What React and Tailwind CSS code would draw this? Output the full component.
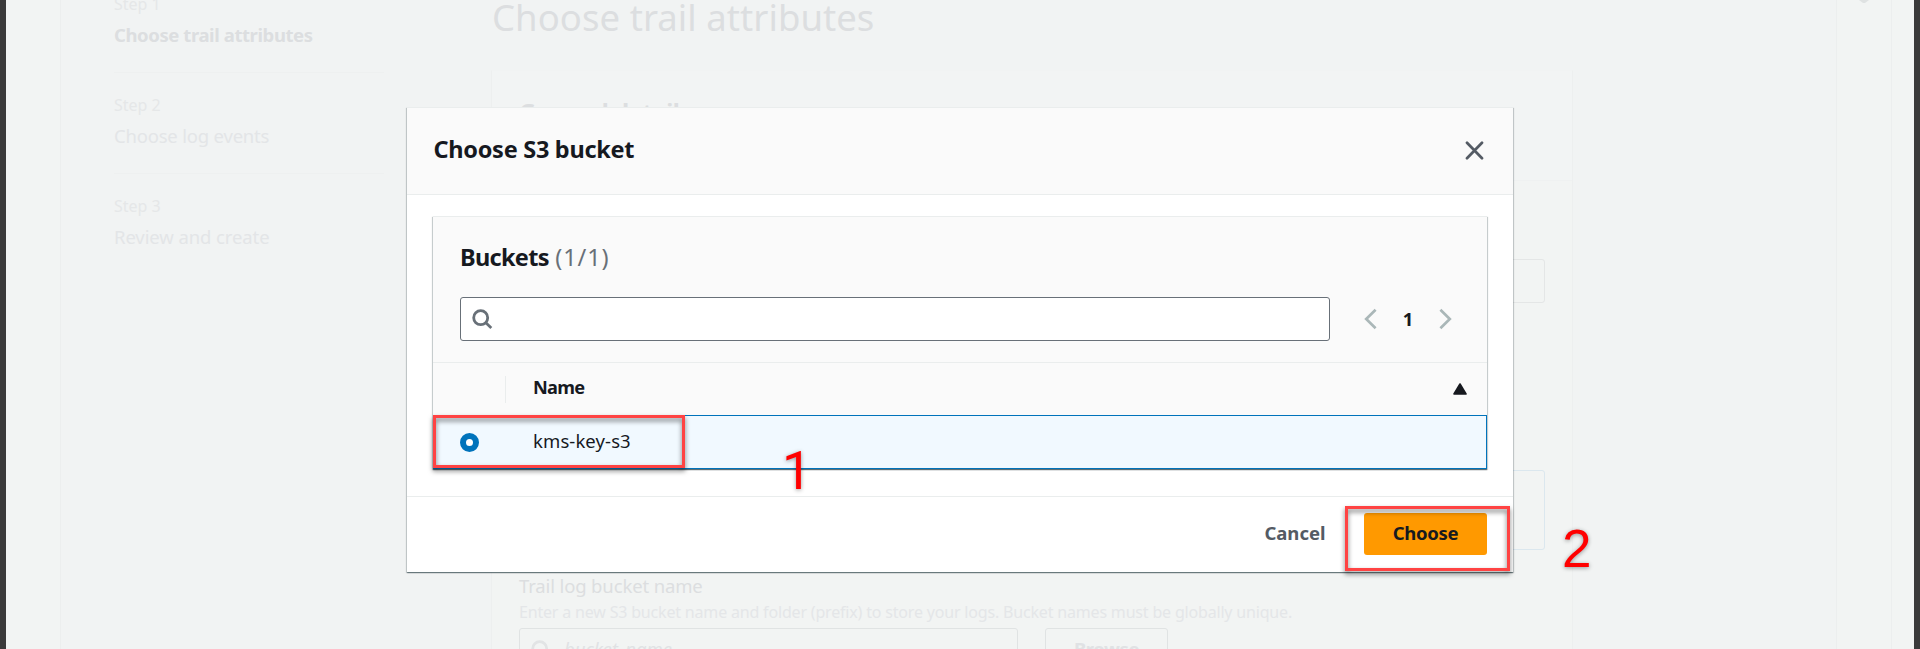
const steps = [
  { label: "Step 1", title: "Choose trail attributes", style: "font-bold tracking-[-0.41px] text-[#dcdee0]" },
  { label: "Step 2", title: "Choose log events", style: "tracking-[-0.2px] text-[#e3e5e7]" },
  { label: "Step 3", title: "Review and create", style: "tracking-[-0.1px] text-[#e3e5e7]" },
];

function SearchIcon({ className }) {
  return (
    <svg className={className} width="21" height="21" viewBox="0 0 21 21" fill="none" stroke="currentColor" strokeWidth="2.8">
      <circle cx="8.7" cy="8.7" r="7" />
      <path d="M13.6 13.6l5.7 5.4" />
    </svg>
  );
}

function Chevron({ flip }) {
  return (
    <svg className={flip ? "-scale-x-100" : ""} width="13" height="22" viewBox="0 0 13 22" fill="none" stroke="#aab7b8" strokeWidth="2.7">
      <path d="M11.6 1.8L2.2 11l9.4 9.2" />
    </svg>
  );
}

function StepNav() {
  return (
    <nav className="-mt-7 ml-[53px] w-[270px] shrink-0">
      {steps.map((s, i) => (
        <div key={s.label} className={`box-border h-[101px] pt-5 ${i < 2 ? "border-b border-[#eef0f0]" : ""}`}>
          <div className="text-base leading-6 text-[#e5e7e8]">{s.label}</div>
          <div className={`mt-[5px] text-[18.5px] leading-7 ${s.style}`}>{s.title}</div>
        </div>
      ))}
    </nav>
  );
}

function TrailForm() {
  return (
    <main className="-mt-[5px] ml-[107px] w-[1082px] shrink-0">
      <h1 className="h-11 pl-px text-[36.5px] leading-[44px] tracking-[0.05px] text-[#dcdee0]">Choose trail attributes</h1>
      <section className="mt-[31px] h-[700px] border-x border-t border-x-[#edefef] border-t-[#f1f3f3] bg-[#f2f4f3]">
        <h2 className="h-[110px] border-b border-[#eff1f1] bg-[#f2f4f4] pt-[25px] pl-[27px] text-[23.5px] leading-8 font-bold tracking-[-0.3px] text-[#dcdee0]">
          General details
        </h2>
        <div className="px-[27px]">
          <div className="mt-[78px] h-11 rounded-[3px] border border-[#e4e6e6]" />
          <div className="mt-[167px] h-[80px] rounded-[3px] border border-[#dbe7ee]" />
          <div className="mt-[22px] text-[18.5px] leading-7 tracking-[-0.14px] text-[#dcdee0]">Trail log bucket name</div>
          <div className="text-base leading-6 tracking-[-0.18px] whitespace-nowrap text-[#e4e6e8]">
            Enter a new S3 bucket name and folder (prefix) to store your logs. Bucket names must be globally unique.
          </div>
          <div className="mt-1 flex gap-[27px]">
            <div className="flex h-11 w-[499px] items-center rounded-[3px] border border-[#e0e3e3] pl-[11px]">
              <SearchIcon className="text-[#e2e4e5]" />
              <span className="mb-0.5 ml-3 text-[18.5px] italic text-[#e0e2e4]">bucket_name</span>
            </div>
            <div className="flex h-11 w-[123px] items-center justify-center rounded-[3px] border border-[#e0e3e3] pb-0.5 text-[18.5px] font-bold tracking-[-0.4px] text-[#e0e2e4]">
              Browse
            </div>
          </div>
        </div>
      </section>
    </main>
  );
}

function BucketTable() {
  return (
    <div className="h-[253px] border-t border-[#eaeded] bg-[#fafafa] shadow-[0_1px_1px_rgba(0,28,36,0.5),1px_1px_1px_rgba(0,28,36,0.15),-1px_1px_1px_rgba(0,28,36,0.15)]">
      <div className="h-[146px] border-b border-[#eaeded] px-[27px] pt-6">
        <div className="flex h-8 text-[23.5px] leading-8">
          <span className="font-bold tracking-[-0.7px]">Buckets</span>
          <span className="ml-[6.5px] tracking-[0.9px] text-[#687078]">(1/1)</span>
        </div>
        <div className="mt-6 flex items-center">
          <div className="flex h-11 w-[870px] items-center rounded-[3px] border border-[#687078] bg-white pl-[11px]">
            <SearchIcon className="text-[#687078]" />
          </div>
          <div className="ml-[34px] flex items-center">
            <Chevron />
            <span className="w-[62px] text-center text-[18.5px] leading-7 font-bold">1</span>
            <Chevron flip />
          </div>
        </div>
      </div>
      <div className="flex h-[52px] items-center pr-5">
        <div className="h-[27px] w-[73px] border-r border-[#eaeded]" />
        <span className="mb-1 ml-[27px] flex-1 text-[18.2px] leading-7 font-bold tracking-[-0.7px]">Name</span>
        <svg width="14" height="12" viewBox="0 0 14 12" fill="#16191f">
          <path d="M7 1L13 11H1z" stroke="#16191f" strokeWidth="1.6" strokeLinejoin="round" />
        </svg>
      </div>
      <div className="flex h-[54px] items-center border border-[#0073bb] bg-[#f1f9ff]">
        <div className="ml-[26px] size-[19px] rounded-full border-[6px] border-[#0073bb] bg-white" />
        <span className="mb-0.5 ml-[54px] text-[18.5px] leading-7 tracking-[0.1px]">kms-key-s3</span>
      </div>
    </div>
  );
}

function BucketDialog() {
  return (
    <div className="absolute top-[107px] left-[407px] h-[465px] w-[1106px] border-t border-[#eaeded] bg-white text-[#16191f] shadow-[0_1px_1px_rgba(0,28,36,0.4),1px_1px_1px_rgba(0,28,36,0.15),-1px_1px_1px_rgba(0,28,36,0.15)]">
      <div className="flex h-[87px] items-center justify-between border-b border-[#eaeded] bg-[#fafafa] pr-[29px] pl-[26.5px]">
        <h2 className="mb-[5px] text-[23.5px] leading-8 font-bold tracking-[-0.28px]">Choose S3 bucket</h2>
        <svg className="-mt-px" width="19" height="19" viewBox="0 0 19 19" fill="none" stroke="#545b64" strokeWidth="2.7" strokeLinecap="round">
          <path d="M2 1.8l15 15.4M17 1.8L2 17.2" />
        </svg>
      </div>
      <div className="h-[302px] border-b border-[#eaeded] px-[26px] pt-[21px]">
        <BucketTable />
      </div>
      <div className="flex h-[74px] items-center justify-end pr-[26px] text-[18.5px] leading-7 font-bold">
        <span className="mr-[38.5px] mb-[3px] text-[#545b64]">Cancel</span>
        <div className="flex h-[42px] w-[123px] items-center justify-center rounded-[3px] bg-[#ff9900] pb-[3px] tracking-[-0.3px]">Choose</div>
      </div>
    </div>
  );
}

const markText = "absolute text-[53px] leading-none text-[#ff0000] drop-shadow-[0_1px_2px_rgba(0,0,0,0.4)]";
const markBox = "absolute border-[3px] border-[#ff4343] drop-shadow-[0_3px_2.5px_rgba(0,0,0,0.55)]";

export default function App() {
  return (
    <div className="relative flex h-[649px] w-[1920px] overflow-hidden bg-[#3a3a3a] px-[6px] font-['Noto_Sans',sans-serif]">
      <div className="flex h-full w-[1908px] overflow-hidden bg-[#f1f3f3]">
        <div className="w-[55px] shrink-0 border-r border-[#eceeee] bg-[#f2f4f3]" />
        <StepNav />
        <TrailForm />
        <div className="ml-[263px] flex w-[56px] shrink-0 justify-center border-x border-[#eceeee] bg-[#f2f4f3]">
          <svg width="10" height="4" viewBox="0 0 10 4" fill="#dfe2e2">
            <path d="M0 0h10L6 3H4z" />
          </svg>
        </div>
        <div className="flex-1 bg-[#f2f4f3]" />
      </div>
      <BucketDialog />
      <div className={`${markBox} top-[415px] left-[433px] h-[53px] w-[252px]`} />
      <div className={`${markBox} top-[506px] left-[1345px] h-[65px] w-[165px]`} />
      <span className={`${markText} top-[445px] left-[782px] font-['Roboto',sans-serif]`}>1</span>
      <span className={`${markText} top-[522px] left-[1562px] font-['Liberation_Sans',sans-serif]`}>2</span>
    </div>
  );
}
